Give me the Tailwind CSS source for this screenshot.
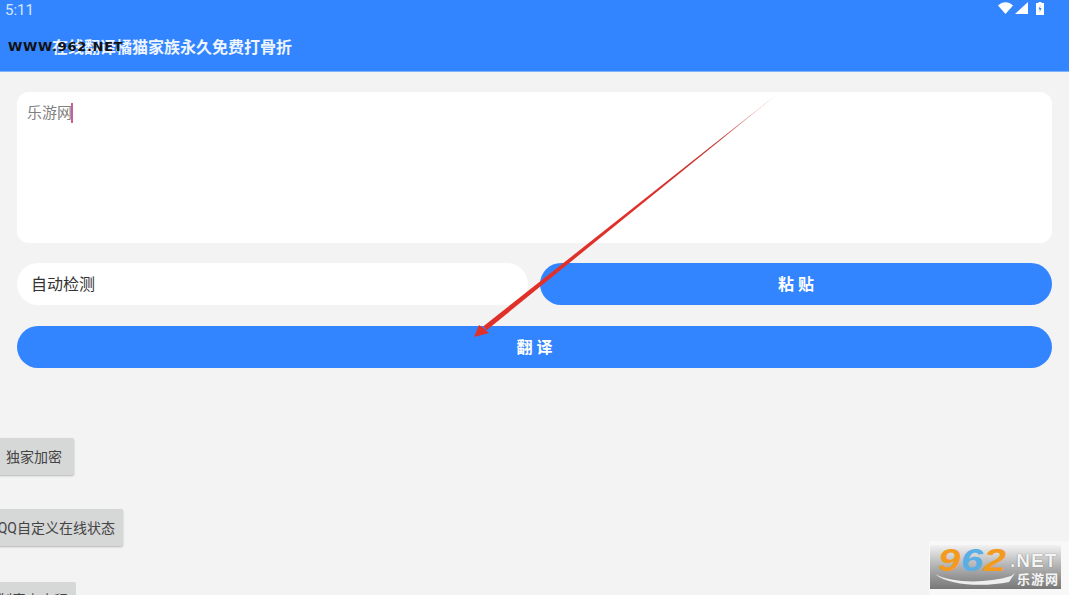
<!DOCTYPE html>
<html lang="zh">
<head>
    <meta charset="UTF-8">
    <title>翻译</title>
    <script src="https://cdn.jsdelivr.net/npm/@tailwindcss/browser@4"></script>
</head>
<body class="bg-[#f3f3f3] font-['Roboto','Noto_Sans_CJK_SC',sans-serif]">
<div class="relative w-[1069px] h-[595px] overflow-hidden">

    <!-- app bar -->
    <header class="h-[72px] bg-[#3385ff] border-b border-[#7fb2ff] text-white">
        <div class="h-[24px] flex items-start justify-between pl-[5px] pr-[25px]">
            <span class="text-[15px] leading-[18px] pt-px text-[#d6e6ff]">5:11</span>
            <div class="flex items-start gap-[2px] pt-[2px]">
                <svg width="15" height="12" viewBox="0 0 15 12"><path d="M0 3.500C4.200 -1 10.800 -1 15 3.500L7.500 12Z" fill="#fff"/></svg>
                <svg width="13" height="12" viewBox="0 0 13 12"><path d="M13 0V12H0Z" fill="#fff"/></svg>
                <svg class="ml-[6px]" width="8" height="13" viewBox="0 0 8 13"><path d="M2.500 0h3v1H8v12H0V1h2.500Z" fill="#fff"/><path d="M4.500 3L2.500 7.500H4L3.500 10.500L5.500 6H4Z" fill="#3385ff"/></svg>
            </div>
        </div>
        <div class="h-[47px] flex items-center pl-[52px]">
            <h1 class="text-[16px] font-bold leading-[22px] text-[#eef5ff]">在线翻译橘猫家族永久免费打骨折</h1>
        </div>
    </header>

    <main class="px-[17px] pt-[20px]">
        <div class="h-[151px] bg-white rounded-[12px] px-[10px] pt-[10px] flex items-start">
            <span class="text-[15px] leading-[22px] text-[#808080]">乐游网</span>
            <span class="w-[2px] h-[20px] mt-[1px] -ml-[1px] bg-[#cc5f90]"></span>
        </div>

        <div class="mt-[20px] flex gap-[12px]">
            <div class="w-[511px] h-[42px] bg-white rounded-full pl-[14px] flex items-center text-[16px] text-[#333333] pt-[2px]">自动检测</div>
            <button class="flex-1 h-[42px] bg-[#3385ff] rounded-full text-white text-[16px] font-bold tracking-[4px] pt-[1px] pl-[4px]">粘贴</button>
        </div>

        <button class="mt-[21px] w-full h-[42px] bg-[#3385ff] rounded-full text-white text-[16px] font-bold tracking-[4px] pt-[1px] pl-[4px] block">翻译</button>
    </main>

    <!-- left side buttons, cut off by the window edge -->
    <div class="mt-[70px] -ml-[10px] flex flex-col items-start">
        <button class="h-[37px] w-[84px] mb-[34px] bg-[#d6d7d7] rounded-[2px] shadow-[0_1px_2px_rgba(0,0,0,0.25)] text-[14px] text-[#444444] text-center pl-[4px] pt-[1px]">独家加密</button>
        <button class="h-[37px] w-[133px] mb-[36px] bg-[#d6d7d7] rounded-[2px] shadow-[0_1px_2px_rgba(0,0,0,0.25)] text-[14px] text-[#444444] text-right pr-[8px] pt-[1px]">QQ自定义在线状态</button>
        <button class="h-[37px] w-[86px] bg-[#d6d7d7] rounded-[2px] text-[14px] text-[#444444] text-right pr-[8px]">制表占小程</button>
    </div>

    <!-- red arrow annotation -->
    <svg class="absolute left-0 top-0 pointer-events-none" width="1069" height="595" viewBox="0 0 1069 595">
        <defs>
            <linearGradient id="arrowFade" gradientUnits="userSpaceOnUse" x1="776" y1="95" x2="640" y2="204">
                <stop offset="0" stop-color="#d0403a" stop-opacity="0.35"/>
                <stop offset="0.4" stop-color="#c0342e"/>
                <stop offset="1" stop-color="#e0302a"/>
            </linearGradient>
        </defs>
        <path d="M776 95L483.400 326.200L486.600 330.200Z" fill="url(#arrowFade)"/>
        <path d="M474 337L479 325L484 328.500L489 333Z" fill="#e0302a"/>
    </svg>

    <!-- watermark, top left -->
    <div class="absolute left-[8px] top-[39px] font-['DejaVu_Sans',sans-serif] font-bold text-[13px] leading-[16px] tracking-[0.7px] text-[#111111]">WWW.962.NET</div>

    <!-- watermark, bottom right -->
    <div class="absolute left-[929px] top-[541px] w-[140px] h-[54px] bg-[#f8f8f8]">
        <div class="relative ml-px mt-[4px] w-[131px] h-[44px] bg-gradient-to-b from-[#f2f2f2] via-[#b0b0b0] to-[#777777]">
            <span class="absolute left-[8px] top-0 inline-block origin-left scale-x-[1.25] font-['Liberation_Sans',sans-serif] font-bold italic text-[32px] leading-[30px] tracking-[0.5px]"><span class="text-[#f39a1f]">9</span><span class="text-[#5aaee6]">6</span><span class="text-[#f39a1f]">2</span></span>
            <span class="absolute left-[80px] top-[6px] font-['Liberation_Sans',sans-serif] font-bold text-[19px] leading-[20px] tracking-[1px] text-[#f4f4f4] [text-shadow:0_0_1px_#555555]">.NET</span>
            <span class="absolute left-[87px] top-[27px] text-[13px] leading-[15px] font-bold text-[#f4f4f4] tracking-[1px]">乐游网</span>
            <svg class="absolute left-[5px] top-[28px]" width="80" height="14" viewBox="0 0 80 14"><path d="M0 1C16 10 50 11 76 3L80 0L74 9C50 14 14 13 0 1Z" fill="#eeeeee"/></svg>
        </div>
    </div>
</div>
</body>
</html>
